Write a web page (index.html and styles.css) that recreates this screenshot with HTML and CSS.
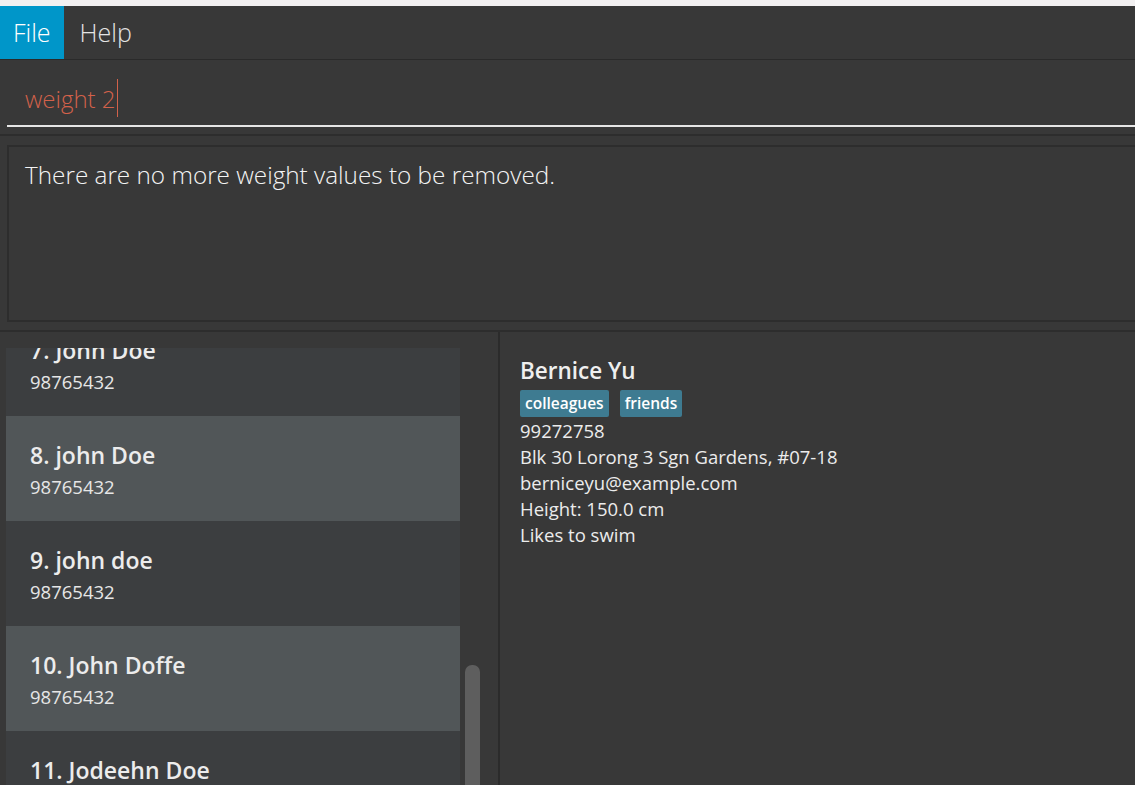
FILE: index.html
```html
<!DOCTYPE html>
<html>
<head>
<meta charset="utf-8">
<link rel="stylesheet" href="styles.css">
</head>
<body>
<div class="app">
  <div class="topstrip"></div>
  <div class="menubar">
    <div class="menu-item active">File</div>
    <div class="menu-item">Help</div>
  </div>
  <div class="command-area">
    <div class="command-field"><span class="command-text">weight 2</span><span class="caret"></span></div>
  </div>
  <div class="result-area">
    <div class="result-box">There are no more weight values to be removed.</div>
  </div>
  <div class="main">
    <div class="list-panel">
      <div class="list-viewport">
        <div class="list-inner">
          <div class="cell dark"><div class="cell-name">7. John Doe</div><div class="cell-phone">98765432</div></div>
          <div class="cell light"><div class="cell-name">8. john Doe</div><div class="cell-phone">98765432</div></div>
          <div class="cell dark"><div class="cell-name">9. john doe</div><div class="cell-phone">98765432</div></div>
          <div class="cell light"><div class="cell-name">10. John Doffe</div><div class="cell-phone">98765432</div></div>
          <div class="cell dark"><div class="cell-name">11. Jodeehn Doe</div><div class="cell-phone">98765432</div></div>
        </div>
      </div>
      <div class="scrollbar"><div class="thumb"></div></div>
    </div>
    <div class="detail-panel">
      <div class="detail-name">Bernice Yu</div>
      <div class="tags"><span class="tag">colleagues</span><span class="tag">friends</span></div>
      <div class="detail-line">99272758</div>
      <div class="detail-line">Blk 30 Lorong 3 Sgn Gardens, #07-18</div>
      <div class="detail-line">berniceyu@example.com</div>
      <div class="detail-line">Height: 150.0 cm</div>
      <div class="detail-line">Likes to swim</div>
    </div>
  </div>
</div>
</body>
</html>
```
FILE: styles.css
```css
html, body {
  margin: 0;
  padding: 0;
  height: 100%;
  overflow: hidden;
}
body {
  background: #383838;
  font-family: "Open Sans", "Noto Sans", sans-serif;
  color: #eeeeee;
}
.app {
  display: flex;
  flex-direction: column;
  height: 785px;
  overflow: hidden;
}
.topstrip {
  height: 6px;
  background: #f2f0f1;
  flex: none;
}
.menubar {
  height: 53px;
  display: flex;
  border-bottom: 1px solid #2a2a2a;
  flex: none;
}
.menu-item {
  font-size: 25px;
  font-weight: 300;
  line-height: 52px;
  padding: 0 13px;
  color: #e4e4e4;
}
.menu-item.active {
  background: #0096c9;
  color: #ffffff;
}
.menu-item + .menu-item {
  padding-left: 16px;
}
.command-area {
  padding: 0 0 7px 7px;
  flex: none;
  border-bottom: 2px solid #2d2d2d;
}
.command-field {
  height: 67px;
  border-bottom: 2px solid #e6e6e6;
  display: flex;
  align-items: center;
  padding-left: 18px;
  padding-top: 11px;
  box-sizing: border-box;
}
.command-text {
  font-size: 24px;
  font-weight: 300;
  color: #d2614a;
}
.caret {
  width: 1px;
  height: 38px;
  background: #d2614a;
  margin-left: 1px;
}
.result-area {
  padding: 9px 0 8px 7px;
  border-bottom: 2px solid #2d2d2d;
  flex: none;
}
.result-box {
  height: 177px;
  border: 2px solid #2d2d2d;
  border-right: none;
  padding: 11px 16px;
  box-sizing: border-box;
  font-size: 24.3px;
  font-weight: 300;
  color: #f4f4f4;
}
.main {
  flex: 1;
  display: flex;
  min-height: 0;
}
.list-panel {
  width: 500px;
  flex: none;
  display: flex;
  border-right: 2px solid #2b2b2b;
  padding-top: 16px;
  box-sizing: border-box;
  background: #383838;
}
.list-viewport {
  margin-left: 6px;
  width: 454px;
  overflow: hidden;
}
.list-inner {
  margin-top: -37px;
}
.cell {
  height: 105px;
  padding: 25px 0 0 24px;
  box-sizing: border-box;
}
.cell.dark { background: #3c3e40; }
.cell.light { background: #515658; }
.cell-name {
  font-size: 23px;
  font-weight: 600;
  line-height: 28px;
  color: #ececec;
}
.cell-phone {
  font-size: 18.5px;
  line-height: 24px;
  margin-top: 6px;
  color: #e6e6e6;
}
.scrollbar {
  width: 15px;
  margin-left: 5px;
  padding-top: 317px;
}
.thumb {
  height: 200px;
  background: #5e5e5e;
  border-radius: 7px;
}
.detail-panel {
  flex: 1;
  padding: 25px 0 0 20px;
  background: #383838;
}
.detail-name {
  font-size: 22.5px;
  font-weight: 600;
  line-height: 28px;
  color: #efefef;
}
.tags {
  display: flex;
  gap: 11px;
  margin-top: 5px;
}
.tag {
  background: #3e7b91;
  color: #ffffff;
  font-size: 15.5px;
  font-weight: 600;
  line-height: 27px;
  padding: 0 5px;
  border-radius: 2px;
}
.detail-line {
  font-size: 18.5px;
  line-height: 26px;
  color: #ececec;
}
.tags + .detail-line {
  margin-top: 1px;
}
```
